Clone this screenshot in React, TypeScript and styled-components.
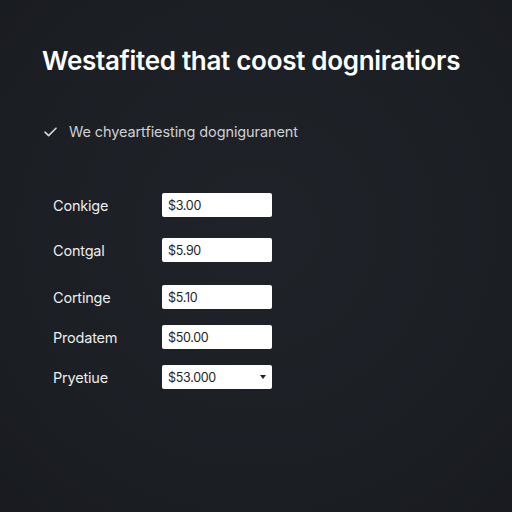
import React from 'react';
import styled, { createGlobalStyle } from 'styled-components';

const GlobalStyle = createGlobalStyle`
  html, body {
    margin: 0;
    padding: 0;
    background: #1c1f25;
  }
`;

const Page = styled.div`
  width: 512px;
  height: 512px;
  box-sizing: border-box;
  padding: 45px 0 0 42px;
  background: radial-gradient(circle at 50% 45%, #1f2228 0%, #1b1e23 70%, #191b20 100%);
  font-family: 'Inter', 'Liberation Sans', sans-serif;
  color: #f2f2f2;
`;

const Title = styled.h1`
  margin: 0;
  font-size: 26px;
  font-weight: 600;
  letter-spacing: -0.3px;
  line-height: 32px;
  color: #ffffff;
`;

const CheckLine = styled.div`
  display: flex;
  align-items: center;
  gap: 12px;
  margin: 46px 0 0 2px;
  font-size: 14.5px;
  letter-spacing: -0.1px;
  color: #cfd0d2;
`;

const Form = styled.div`
  display: flex;
  flex-direction: column;
  margin: 53px 0 0 11px;
`;

const Row = styled.div<{ $space: number }>`
  display: grid;
  grid-template-columns: 109px 110px;
  align-items: center;
  height: 24px;
  margin-bottom: ${(p) => p.$space}px;
`;

const Label = styled.span`
  font-size: 14.5px;
  letter-spacing: -0.2px;
  color: #ececec;
`;

const Field = styled.div`
  position: relative;
  height: 24px;
  box-sizing: border-box;
  padding: 0 6px;
  display: flex;
  align-items: center;
  background: #ffffff;
  border-radius: 2px;
  font-size: 12.5px;
  letter-spacing: -0.3px;
  color: #1e1e1e;
`;

const Caret = styled.span`
  position: absolute;
  right: 6px;
  top: 10px;
  width: 0;
  height: 0;
  border-left: 3.5px solid transparent;
  border-right: 3.5px solid transparent;
  border-top: 4px solid #222;
`;

const rows = [
  { label: 'Conkige', value: '$3.00', space: 21 },
  { label: 'Contgal', value: '$5.90', space: 23 },
  { label: 'Cortinge', value: '$5.10', space: 16 },
  { label: 'Prodatem', value: '$50.00', space: 16 },
  { label: 'Pryetiue', value: '$53.000', space: 0, select: true },
];

export default function App() {
  return (
    <Page>
      <GlobalStyle />
      <Title>Westafited that coost dogniratiors</Title>
      <CheckLine>
        <svg width="13" height="10" viewBox="0 0 13 10" fill="none">
          <path d="M1 5.2 L4.6 8.6 L12 1.2" stroke="#d8d8d8" strokeWidth="1.6" strokeLinecap="round" strokeLinejoin="round" />
        </svg>
        <span>We chyeartfiesting dogniguranent</span>
      </CheckLine>
      <Form>
        {rows.map((r) => (
          <Row key={r.label} $space={r.space}>
            <Label>{r.label}</Label>
            <Field>
              {r.value}
              {r.select && <Caret />}
            </Field>
          </Row>
        ))}
      </Form>
    </Page>
  );
}
